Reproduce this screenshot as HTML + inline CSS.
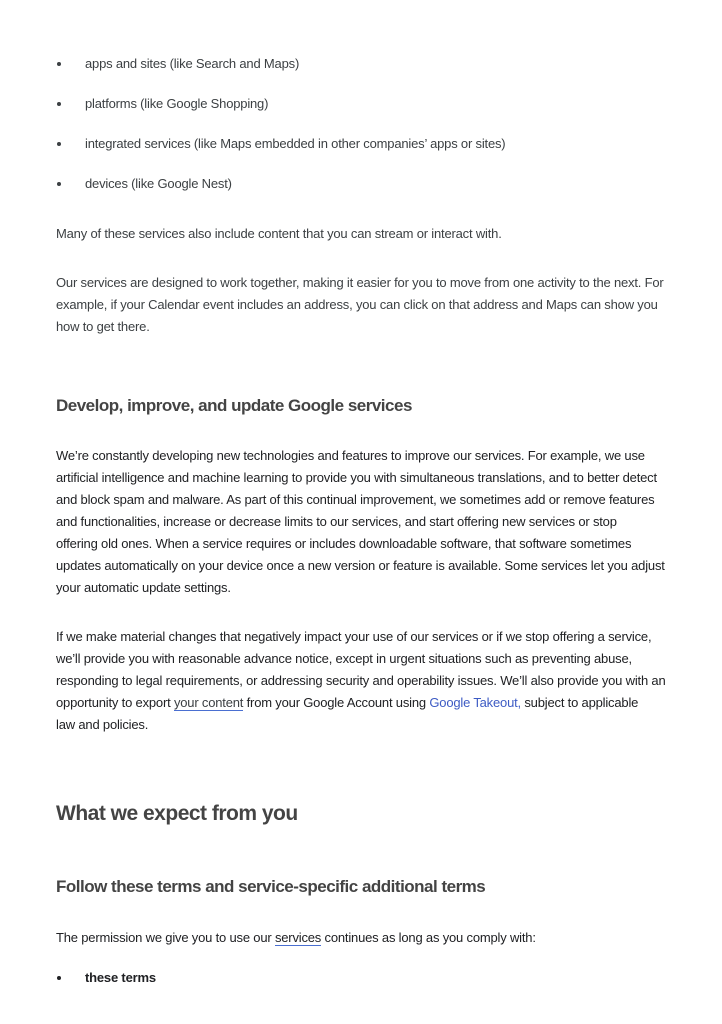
<!DOCTYPE html>
<html><head><meta charset="utf-8"><style>
body{margin:0;background:#fff;font-family:"Liberation Sans",sans-serif;}
.t{position:absolute;left:56px;white-space:nowrap;font-size:13px;letter-spacing:-0.19px;color:#3c4043;}
.d{color:#202124;}
.b{position:absolute;left:57px;width:4px;height:4px;border-radius:50%;background:#3c4043;}
.h{position:absolute;left:56px;white-space:nowrap;color:#444;font-weight:bold;}
a{color:#3c4043;text-decoration:none;border-bottom:1px solid #4a6fd1;}
.l{color:#3d5bc4;}
</style></head><body>
<div class="b" style="top:62px"></div><div class="t" style="left:85px;top:56px">apps and sites (like Search and Maps)</div>
<div class="b" style="top:102px"></div><div class="t" style="left:85px;top:96px">platforms (like Google Shopping)</div>
<div class="b" style="top:142px"></div><div class="t" style="left:85px;top:136px">integrated services (like Maps embedded in other companies’ apps or sites)</div>
<div class="b" style="top:182px"></div><div class="t" style="left:85px;top:176px">devices (like Google Nest)</div>
<div class="t" style="top:226px">Many of these services also include content that you can stream or interact with.</div>
<div class="t" style="top:272px;line-height:22px">Our services are designed to work together, making it easier for you to move from one activity to the next. For<br>example, if your Calendar event includes an address, you can click on that address and Maps can show you<br>how to get there.</div>
<div class="h" style="top:396px;font-size:17px;letter-spacing:-0.5px">Develop, improve, and update Google services</div>
<div class="t d" style="top:445px;line-height:22px">We’re constantly developing new technologies and features to improve our services. For example, we use<br>artificial intelligence and machine learning to provide you with simultaneous translations, and to better detect<br>and block spam and malware. As part of this continual improvement, we sometimes add or remove features<br>and functionalities, increase or decrease limits to our services, and start offering new services or stop<br>offering old ones. When a service requires or includes downloadable software, that software sometimes<br>updates automatically on your device once a new version or feature is available. Some services let you adjust<br>your automatic update settings.</div>
<div class="t d" style="top:626px;line-height:22px">If we make material changes that negatively impact your use of our services or if we stop offering a service,<br>we’ll provide you with reasonable advance notice, except in urgent situations such as preventing abuse,<br>responding to legal requirements, or addressing security and operability issues. We’ll also provide you with an<br>opportunity to export <a>your content</a> from your Google Account using <span class="l">Google Takeout,</span> subject to applicable<br>law and policies.</div>
<div class="h" style="top:802px;font-size:21px;letter-spacing:-0.5px">What we expect from you</div>
<div class="h" style="top:877px;font-size:17px;letter-spacing:-0.5px">Follow these terms and service-specific additional terms</div>
<div class="t d" style="top:930px">The permission we give you to use our <a style="color:#202124">services</a> continues as long as you comply with:</div>
<div class="b" style="top:976px;background:#202124"></div><div class="t d" style="left:85px;top:970px;font-weight:bold">these terms</div>
</body></html>
